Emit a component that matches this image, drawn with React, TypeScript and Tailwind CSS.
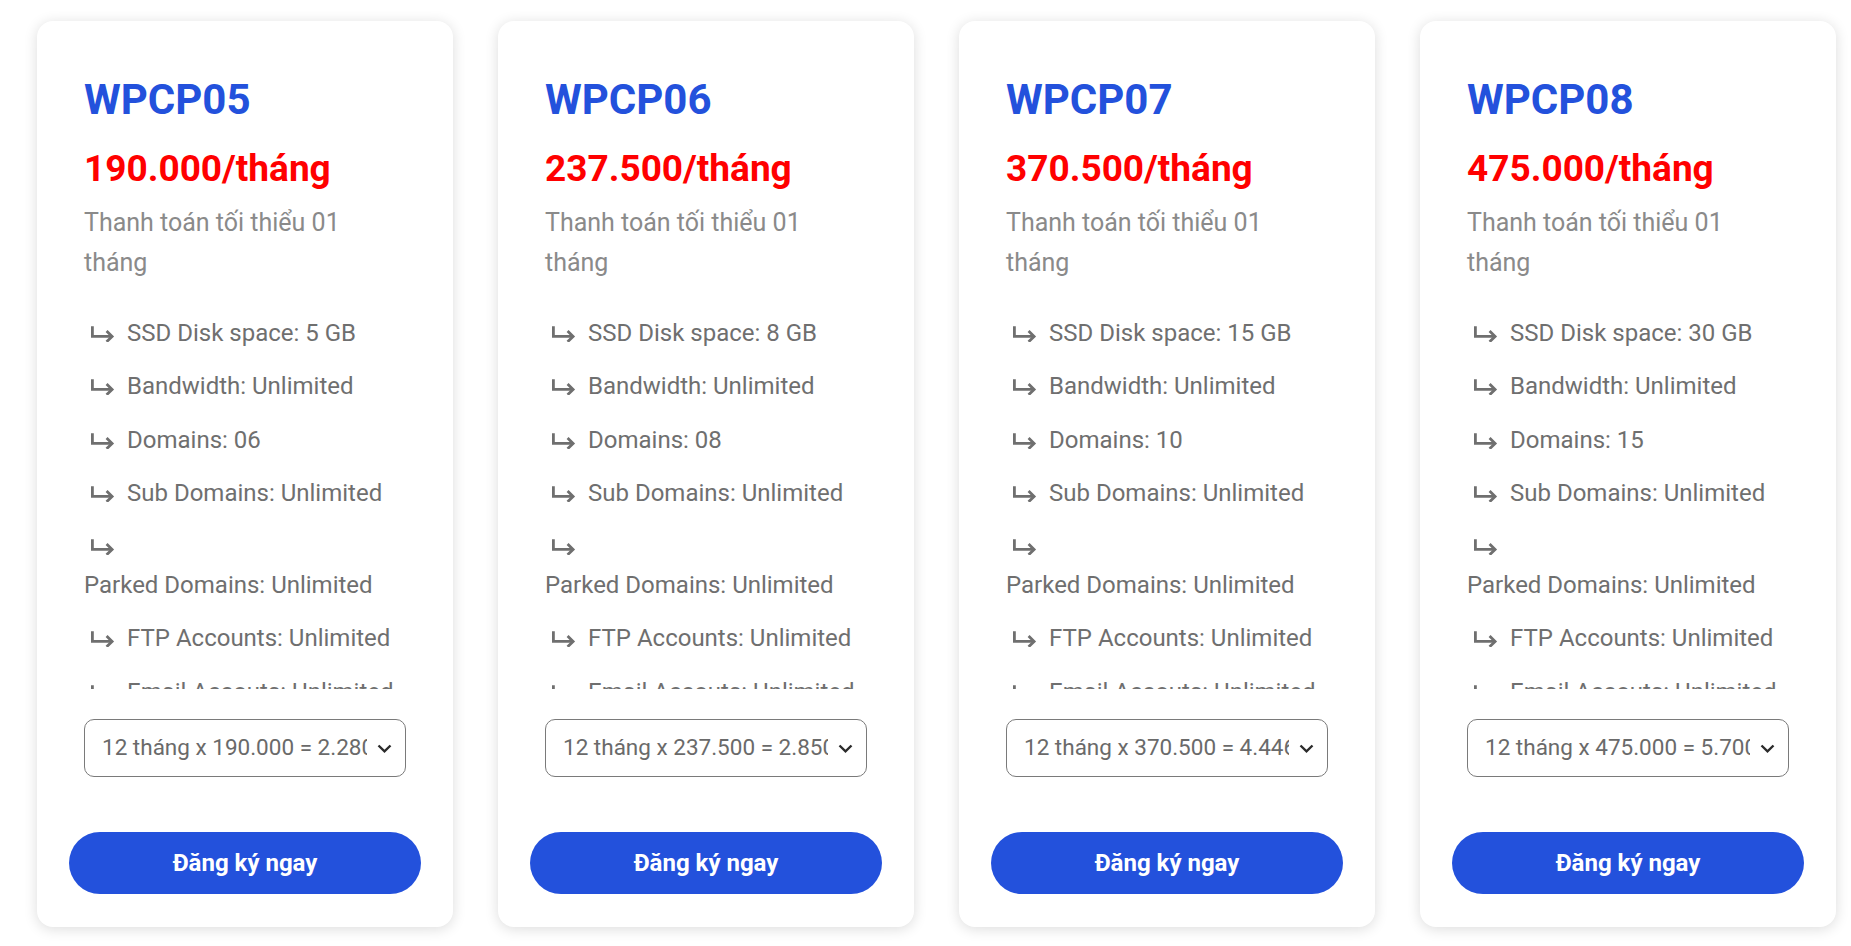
import { useState } from 'react';

const plans = [
  { name: 'WPCP05', price: 190000, disk: '5 GB', domains: '06' },
  { name: 'WPCP06', price: 237500, disk: '8 GB', domains: '08' },
  { name: 'WPCP07', price: 370500, disk: '15 GB', domains: '10' },
  { name: 'WPCP08', price: 475000, disk: '30 GB', domains: '15' },
];

const months = [1, 3, 6, 12, 24];

// 190000 -> "190.000"
const fmt = (n: number) => String(n).replace(/\B(?=(\d{3})+(?!\d))/g, '.');

const HookArrow = () => (
  <svg
    width="25"
    height="16"
    viewBox="0 0 25 16"
    fill="none"
    stroke="currentColor"
    strokeWidth="2.8"
    className="inline-block align-[-1px] ml-[6px] mr-[12px]"
  >
    <path d="M2.4 0.3V10.4H22" />
    <path d="M16.6 5L22.1 10.4L16.6 15.8" />
  </svg>
);

const PlanCard = ({ plan }: { plan: (typeof plans)[number] }) => {
  const [term, setTerm] = useState('12');

  const features = [
    `SSD Disk space: ${plan.disk}`,
    'Bandwidth: Unlimited',
    `Domains: ${plan.domains}`,
    'Sub Domains: Unlimited',
    'Parked Domains: Unlimited',
    'FTP Accounts: Unlimited',
    'Email Accouts: Unlimited',
    'MySQL Databases: Unlimited',
  ];

  return (
    <div className="w-[416px] shrink-0 rounded-2xl bg-white p-8 pb-[33px] shadow-[0_2px_14px_rgba(0,0,0,0.14)] flex flex-col">
      <div className="px-[15px] pt-[22px]">
        <h3 className="text-[42px] leading-[1.2] font-bold text-[#2351dc]">{plan.name}</h3>
        <p className="mt-[22px] text-[37px] leading-[1.2] font-bold text-[#ff0000]">
          {fmt(plan.price)}/tháng
        </p>
        <p className="mt-[11.5px] text-[25px] leading-[40px] text-[#8a8a8a]">
          Thanh toán tối thiểu 01 tháng
        </p>

        {/* feature list is cut off on purpose, like the original widget */}
        <div className="mt-[30.5px] h-[375px] overflow-hidden">
          <ul className="flex flex-col gap-[15px] text-[24px] leading-[38.4px] text-[#6f6f6f]">
            {features.map((f) => (
              <li key={f}>
                <HookArrow />
                <span className="inline-block">{f}</span>
              </li>
            ))}
          </ul>
        </div>

        <div className="relative mt-[30px]">
          <select
            value={term}
            onChange={(e) => setTerm(e.target.value)}
            className="block w-full h-[58px] appearance-none rounded-[10px] border border-[#7a7a7a] bg-white pl-[17px] pr-[38px] text-[22.5px] text-[#6a6a6a] outline-none"
          >
            {months.map((m) => (
              <option key={m} value={m}>
                {m} tháng x {fmt(plan.price)} = {fmt(plan.price * m)}
              </option>
            ))}
          </select>
          <svg
            width="15"
            height="9"
            viewBox="0 0 15 9"
            fill="none"
            stroke="#2b2b2b"
            strokeWidth="2.4"
            className="pointer-events-none absolute right-[14px] top-[25px]"
          >
            <path d="M1.5 1.5L7.5 7.3L13.5 1.5" />
          </svg>
        </div>
      </div>

      <button className="mt-[55px] h-[62px] w-full rounded-full bg-[#2351dc] text-[24px] font-bold text-white">
        Đăng ký ngay
      </button>
    </div>
  );
};

export default function App() {
  return (
    <div className="min-h-screen bg-white pt-[21px] pl-[37px] font-['Roboto',_'Liberation_Sans',_sans-serif]">
      <div className="flex gap-[45px]">
        {plans.map((p) => (
          <PlanCard key={p.name} plan={p} />
        ))}
      </div>
    </div>
  );
}
